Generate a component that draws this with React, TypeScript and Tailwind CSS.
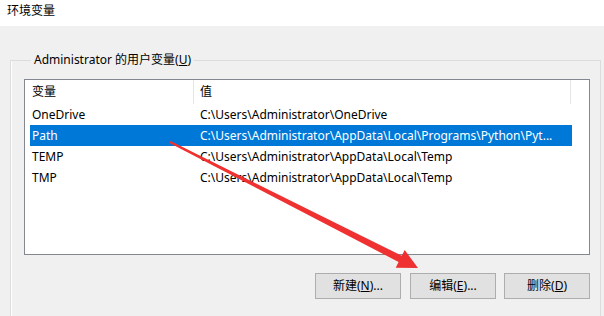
const rows = [
  { name: 'OneDrive', value: 'C:\\Users\\Administrator\\OneDrive' },
  { name: 'Path', value: 'C:\\Users\\Administrator\\AppData\\Local\\Programs\\Python\\Pyt...', selected: true },
  { name: 'TEMP', value: 'C:\\Users\\Administrator\\AppData\\Local\\Temp' },
  { name: 'TMP', value: 'C:\\Users\\Administrator\\AppData\\Local\\Temp' },
];

function DlgButton({ label, hotkey, tail }: { label: string; hotkey: string; tail?: string }) {
  return (
    <button
      type="button"
      className="w-[86px] h-[26px] border border-[#adadad] bg-[#e1e1e1] text-[12px] leading-none text-black flex items-center justify-center"
    >
      {label}(<span className="underline">{hotkey}</span>){tail}
    </button>
  );
}

export default function App() {
  return (
    <div className="relative w-[604px] h-[316px] overflow-hidden bg-[#f0f0f0] text-black font-['Segoe_UI','Noto_Sans','Noto_Sans_CJK_SC',sans-serif] text-[12px]">
      {/* title */}
      <div className="h-[26px] bg-white pl-[7px] pt-[3px] leading-[16px]">环境变量</div>

      {/* group box */}
      <fieldset className="ml-[10px] mt-[26px] w-[591px] border border-[#dcdcdc] shadow-[inset_1px_0_0_#ffffff] pl-[13px] pt-[11px] pb-[40px]">
        <legend className="ml-[7px] px-[3px] leading-[16px]">
          Administrator 的用户变量(<span className="underline">U</span>)
        </legend>

        {/* list view */}
        <div className="w-[566px] h-[176px] border border-[#828790] bg-white">
          <div className="flex h-[24px] items-center">
            <div className="w-[169px] h-full pl-[7px] flex items-center border-r border-[#e5e5e5]">变量</div>
            <div className="w-[377px] h-full pl-[6px] flex items-center border-r border-[#e5e5e5]">值</div>
          </div>
          {rows.map((r) => (
            <div
              key={r.name}
              className={`ml-[5px] w-[542px] h-[21px] flex items-center whitespace-nowrap overflow-hidden ${
                r.selected ? 'bg-[#0078d7] text-white' : ''
              }`}
            >
              <div className="w-[163px] pl-[2px]">{r.name}</div>
              <div className="pl-[7px]">{r.value}</div>
            </div>
          ))}
        </div>

        {/* buttons */}
        <div className="w-[566px] mt-[18px] flex justify-end">
          <DlgButton label="新建" hotkey="N" tail="..." />
          <div className="w-[9px]" />
          <DlgButton label="编辑" hotkey="E" tail="..." />
          <div className="w-[8px]" />
          <DlgButton label="删除" hotkey="D" />
        </div>
      </fieldset>

      {/* red annotation arrow */}
      <svg className="absolute left-0 top-0 pointer-events-none" width="604" height="316" viewBox="0 0 604 316">
        <polygon
          points="170.5,141.1 401.8,255.8 404.7,250.0 418,268 395.7,267.8 398.6,262.0 169.5,142.9"
          fill="#ef3131"
        />
      </svg>
    </div>
  );
}
